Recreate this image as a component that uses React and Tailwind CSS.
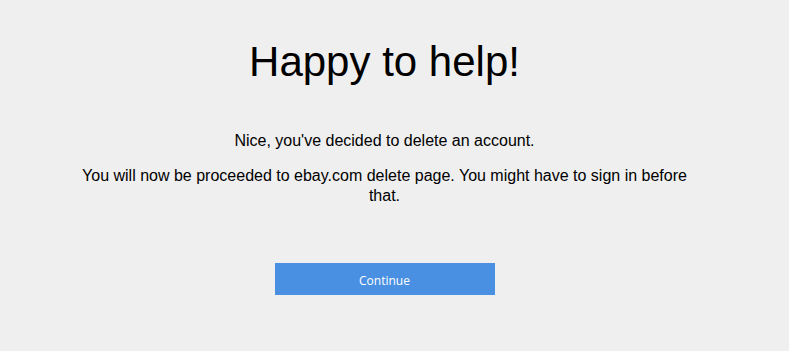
export default function App() {
  return (
    <div className="min-h-[351px] w-full bg-[#efefef] font-['Liberation_Sans',Arial,sans-serif] text-black">
      <div className="flex w-[769px] flex-col items-center pt-[38px]">
        <h1 className="text-[42px] leading-[47px] font-normal">Happy to help!</h1>
        <p className="mt-[46px] text-[16px] leading-[20px]">Nice, you've decided to delete an account.</p>
        <p className="mt-[15px] w-[620px] text-center text-[16px] leading-[20px]">
          You will now be proceeded to ebay.com delete page. You might have to sign in before that.
        </p>
        <button className="mt-[57px] flex h-[32px] w-[220px] items-center justify-center bg-[#4a90e2] pt-[3px] font-['Open_Sans',sans-serif] text-[12px] text-white">
          Continue
        </button>
      </div>
    </div>
  );
}
